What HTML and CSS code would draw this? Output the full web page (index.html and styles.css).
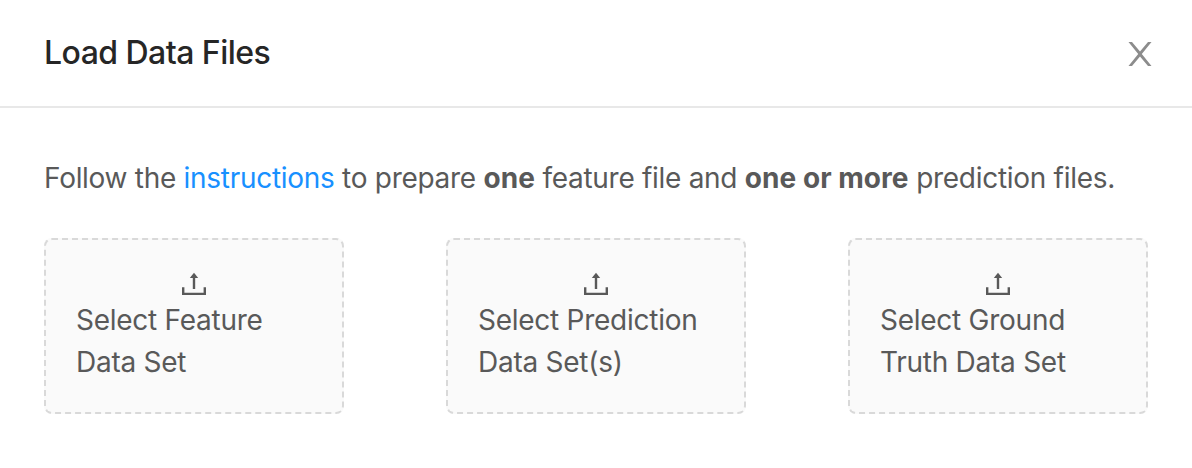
FILE: index.html
```html
<!DOCTYPE html>
<html lang="en">
<head>
  <meta charset="UTF-8">
  <meta name="viewport" content="width=device-width, initial-scale=1.0">
  <title>Load Data Files</title>
  <link rel="stylesheet" href="styles.css">
</head>
<body>
  <div class="modal">
    <div class="modal-header">
      <div class="modal-title">Load Data Files</div>
      <button type="button" class="modal-close" aria-label="Close">
        <svg width="24" height="24" viewBox="0 0 24 24"><path d="M0.500 0H4L12 9.500L20 0H23.500L13.800 12L23.500 24H20L12 14.500L4 24H0.500L10.200 12Z"/></svg>
      </button>
    </div>
    <div class="modal-body">
      <p class="intro">Follow the <a href="#">instructions</a> to prepare <b>one</b> feature file and <b>one or more</b> prediction files.</p>
      <div class="uploads">
        <div class="upload">
          <svg class="upload-icon" width="24" height="24" viewBox="0 0 24 24"><path d="M1.200 15.300V21.900H22.800V15.300M12 17V4"/><path class="arrow" d="M12 0.700L16.200 6H7.800Z"/></svg>
          <div class="upload-text">Select Feature<br>Data Set</div>
        </div>
        <div class="upload">
          <svg class="upload-icon" width="24" height="24" viewBox="0 0 24 24"><path d="M1.200 15.300V21.900H22.800V15.300M12 17V4"/><path class="arrow" d="M12 0.700L16.200 6H7.800Z"/></svg>
          <div class="upload-text">Select Prediction<br>Data Set(s)</div>
        </div>
        <div class="upload">
          <svg class="upload-icon" width="24" height="24" viewBox="0 0 24 24"><path d="M1.200 15.300V21.900H22.800V15.300M12 17V4"/><path class="arrow" d="M12 0.700L16.200 6H7.800Z"/></svg>
          <div class="upload-text">Select Ground<br>Truth Data Set</div>
        </div>
      </div>
    </div>
  </div>
</body>
</html>
```
FILE: styles.css
```css
body {
  margin: 0;
  background-color: #fff;
  font-family: Inter, sans-serif;
  font-size: 28px;
  line-height: 42px;
  color: #595959;
}
.modal-header {
  display: flex;
  justify-content: space-between;
  align-items: center;
  box-sizing: border-box;
  height: 108px;
  padding: 0 40px 0 44px;
  border-bottom: 2px solid #e8e8e8;
}
.modal-title {
  font-size: 32px;
  font-weight: 500;
  letter-spacing: -0.54px;
  color: #262626;
}
.modal-close {
  display: flex;
  padding: 2px 0 0;
  border: none;
  background: none;
  cursor: pointer;
}
.modal-close svg {
  fill: #8c8c8c;
}
.modal-body {
  padding: 49px 44px 0;
}
.intro {
  margin: 0 0 39px;
  letter-spacing: -0.29px;
  white-space: nowrap;
}
.intro a {
  color: #1890ff;
  text-decoration: none;
}
.intro b {
  letter-spacing: 0.05px;
}
.uploads {
  display: flex;
  justify-content: space-between;
}
.upload {
  box-sizing: border-box;
  width: 300px;
  height: 176px;
  padding: 32px 30px 0;
  border: 2px dashed #d9d9d9;
  border-radius: 8px;
  background-color: #fafafa;
}
.upload-icon {
  display: block;
  margin: 0 auto 3px;
  fill: none;
  stroke: #595959;
  stroke-width: 2.4;
}
.upload-icon .arrow {
  fill: #595959;
  stroke: none;
}
.upload-text {
  letter-spacing: -0.26px;
}
```
